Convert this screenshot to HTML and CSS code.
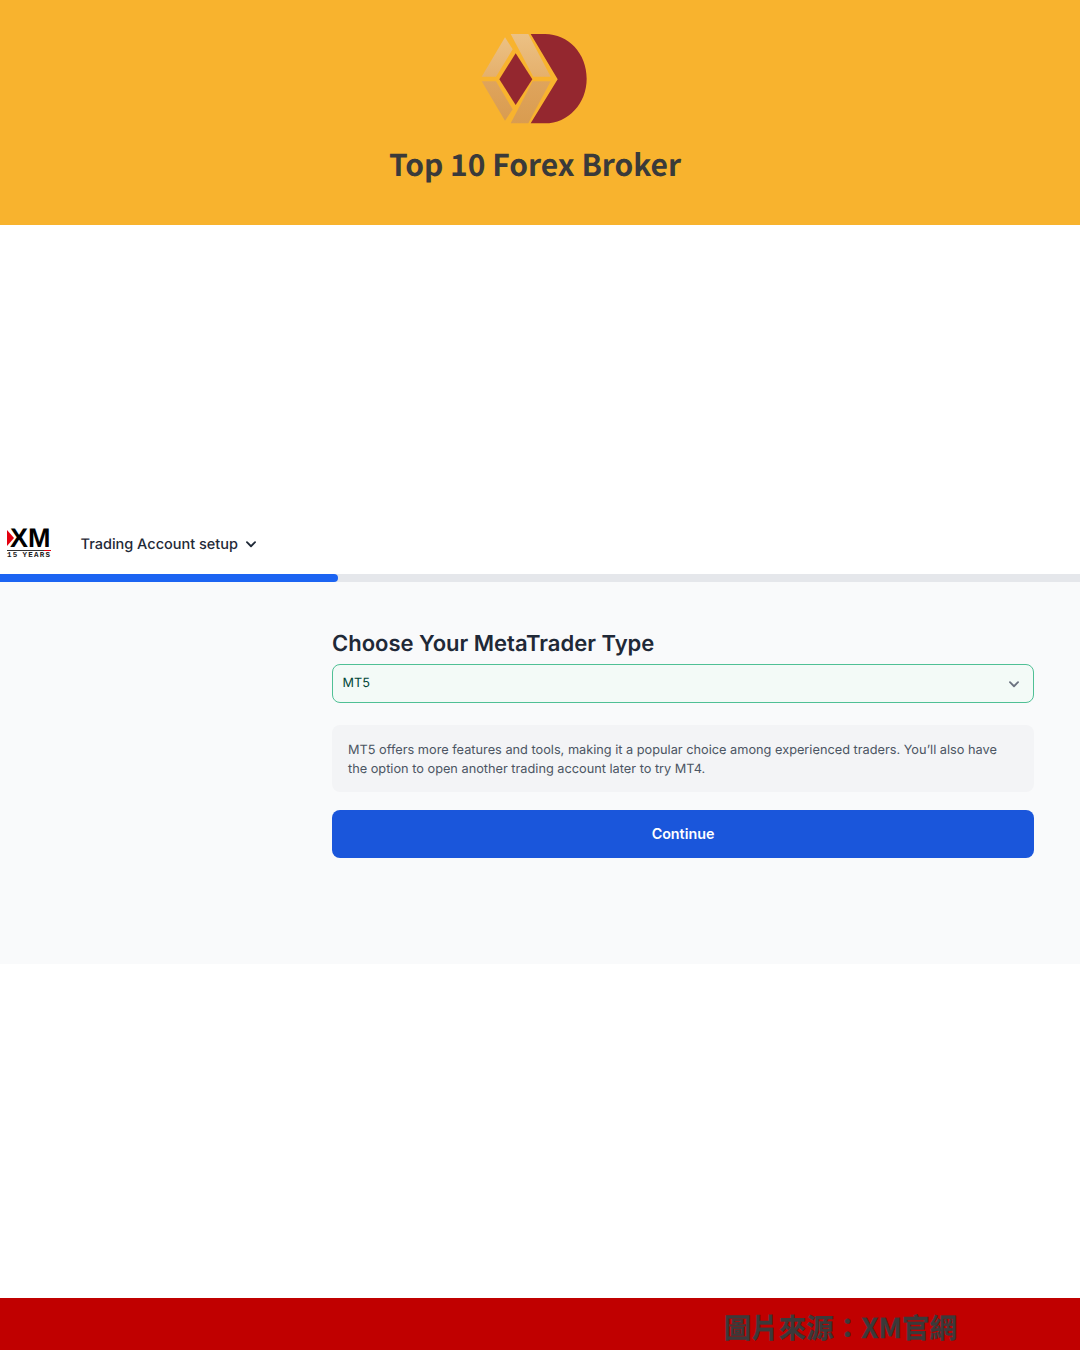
FILE: index.html
```html
<!DOCTYPE html>
<html lang="en">
<head>
  <meta charset="UTF-8" />
  <meta name="viewport" content="width=device-width, initial-scale=1.0"/>
  <title>Top 10 Forex Broker</title>
  <link rel="stylesheet" href="styles.css">
</head>
<body>
  <div class="page">
    <header class="banner">
      <svg class="banner-logo" viewBox="0 0 450 345" width="150" height="115" aria-hidden="true">
        <defs>
          <linearGradient id="bandTop" x1="0" y1="0" x2="0" y2="1">
            <stop offset="0" stop-color="#ecc184"/>
            <stop offset="1" stop-color="#e5b06c"/>
          </linearGradient>
          <linearGradient id="bandBottom" x1="0" y1="0" x2="0" y2="1">
            <stop offset="0" stop-color="#dfa45c"/>
            <stop offset="1" stop-color="#d99c50"/>
          </linearGradient>
        </defs>
        <path fill="#94272f" d="M212 42H255C325 42 380 100 380 176C380 250 325 310 255 310H212L293 178Z"/>
        <path fill="#94272f" d="M167 100L217 178L167 255L118 178Z"/>
        <path fill="url(#bandTop)" d="M135 52L158 88L108 170H65Z"/>
        <path fill="url(#bandTop)" d="M152 42H205L272 170H220Z"/>
        <path fill="url(#bandBottom)" d="M65 184H108L158 268L135 302Z"/>
        <path fill="url(#bandBottom)" d="M218 184H272L205 310H152Z"/>
      </svg>
      <h1 class="banner-title">Top 10 Forex Broker</h1>
    </header>

    <section class="app">
      <nav class="app-nav">
        <div class="xm-logo">
          <span class="xm-mark"><span class="xm-flag"></span>XM</span>
          <span class="xm-rule"></span>
          <span class="xm-years">15 YEARS</span>
        </div>
        <div class="nav-menu">
          <span>Trading Account setup</span>
          <svg viewBox="0 0 20 20" width="18" height="18" fill="none" stroke="#1f2937" stroke-width="2" stroke-linecap="round" stroke-linejoin="round" aria-hidden="true">
            <path d="M5.500 8l4.500 4.500L14.500 8"/>
          </svg>
        </div>
      </nav>
      <div class="progress"><div class="progress-bar" style="width: 338px"></div></div>

      <main class="panel">
        <div class="panel-form">
          <h2>Choose Your MetaTrader Type</h2>
          <div class="select-box">
            <span>MT5</span>
            <svg viewBox="0 0 20 20" width="18" height="18" fill="none" stroke="#6b7280" stroke-width="2" stroke-linecap="round" stroke-linejoin="round" aria-hidden="true">
              <path d="M5.500 8l4.500 4.500L14.500 8"/>
            </svg>
          </div>
          <p class="note">MT5 offers more features and tools, making it a popular choice among experienced traders. You’ll also have the option to open another trading account later to try MT4.</p>
          <button type="button">Continue</button>
        </div>
      </main>
    </section>

    <footer class="source-bar">
      <span lang="zh-Hant">圖片來源：XM官網</span>
    </footer>
  </div>
</body>
</html>
```

FILE: styles.css
```css
body {
  margin: 0;
  padding: 0;
  background-color: #ffffff;
  font-family: Inter, "Noto Sans", sans-serif;
  text-rendering: geometricPrecision;
}
.page {
  display: flex;
  flex-direction: column;
  height: 1350px;
}
.banner {
  display: flex;
  flex-direction: column;
  align-items: center;
  height: 225px;
  box-sizing: border-box;
  padding-top: 20px;
  padding-right: 10px;
  background-color: #f8b32e;
}
.banner-logo {
  display: block;
}
.banner-title {
  margin: 6px 0 0;
  font-family: "Noto Sans CJK TC", "Noto Sans", sans-serif;
  font-size: 30px;
  line-height: 44px;
  font-weight: 700;
  color: #3a3a3a;
}
.app {
  margin-top: 300px;
}
.app-nav {
  display: flex;
  align-items: center;
  height: 49px;
  box-sizing: border-box;
  padding: 0 0 11px 7px;
  background-color: #ffffff;
}
.xm-logo {
  display: flex;
  flex-direction: column;
  width: 44px;
  margin-right: 29.500px;
}
.xm-mark {
  position: relative;
  height: 20px;
  padding-left: 3px;
  font-family: "Liberation Sans", sans-serif;
  font-size: 27px;
  line-height: 20px;
  font-weight: 700;
  color: #000000;
  white-space: nowrap;
}
.xm-flag {
  position: absolute;
  left: 0;
  top: 2px;
  border-left: 7px solid #e3000f;
  border-top: 8px solid transparent;
  border-bottom: 8px solid transparent;
}
.xm-rule {
  height: 1px;
  margin-top: 2px;
  background: linear-gradient(to right, #333 0 85%, #e3000f 85%);
}
.xm-years {
  margin-top: 1px;
  font-family: "Liberation Mono", monospace;
  font-size: 7.500px;
  line-height: 9px;
  font-weight: 700;
  letter-spacing: 1.200px;
  word-spacing: -1.500px;
  color: #222222;
  white-space: nowrap;
}
.nav-menu {
  display: flex;
  align-items: center;
  gap: 4px;
  font-size: 14.500px;
  font-weight: 500;
  color: #1f2937;
}
.progress {
  height: 8px;
  background-color: #e5e7eb;
}
.progress-bar {
  height: 100%;
  background-color: #1c64f2;
  border-radius: 0 4px 4px 0;
}
.panel {
  display: flex;
  justify-content: flex-end;
  height: 382px;
  box-sizing: border-box;
  padding: 48px 46px 0 0;
  background-color: #f9fafb;
}
.panel-form {
  width: 702px;
}
.panel-form h2 {
  margin: 0 0 5px;
  font-size: 22px;
  line-height: 29px;
  font-weight: 600;
  color: #1f2937;
}
.select-box {
  display: flex;
  align-items: center;
  justify-content: space-between;
  height: 39px;
  box-sizing: border-box;
  padding: 0 10px 0 9.500px;
  font-size: 12.700px;
  color: #014737;
  background-color: #f3faf7;
  border: 1.500px solid #4fc095;
  border-radius: 8px;
}
.note {
  margin: 22px 0 18px;
  padding: 16px 16px 13px;
  font-size: 12.750px;
  line-height: 19px;
  color: #4b5563;
  background-color: #f3f4f6;
  border-radius: 8px;
}
button {
  display: block;
  width: 100%;
  height: 48px;
  padding: 0 0 2px;
  font-family: inherit;
  font-size: 14.300px;
  font-weight: 600;
  color: #ffffff;
  background-color: #1a56db;
  border: none;
  border-radius: 8px;
  cursor: pointer;
}
.source-bar {
  display: flex;
  justify-content: flex-end;
  align-items: center;
  height: 52px;
  margin-top: auto;
  padding: 3px 123px 0 0;
  box-sizing: border-box;
  background-color: #c00000;
}
.source-bar span {
  font-family: "Noto Sans CJK TC", sans-serif;
  font-size: 27.500px;
  font-weight: 700;
  -webkit-text-stroke: 0.4px #3a3a3a;
  color: #3a3a3a;
}
```
